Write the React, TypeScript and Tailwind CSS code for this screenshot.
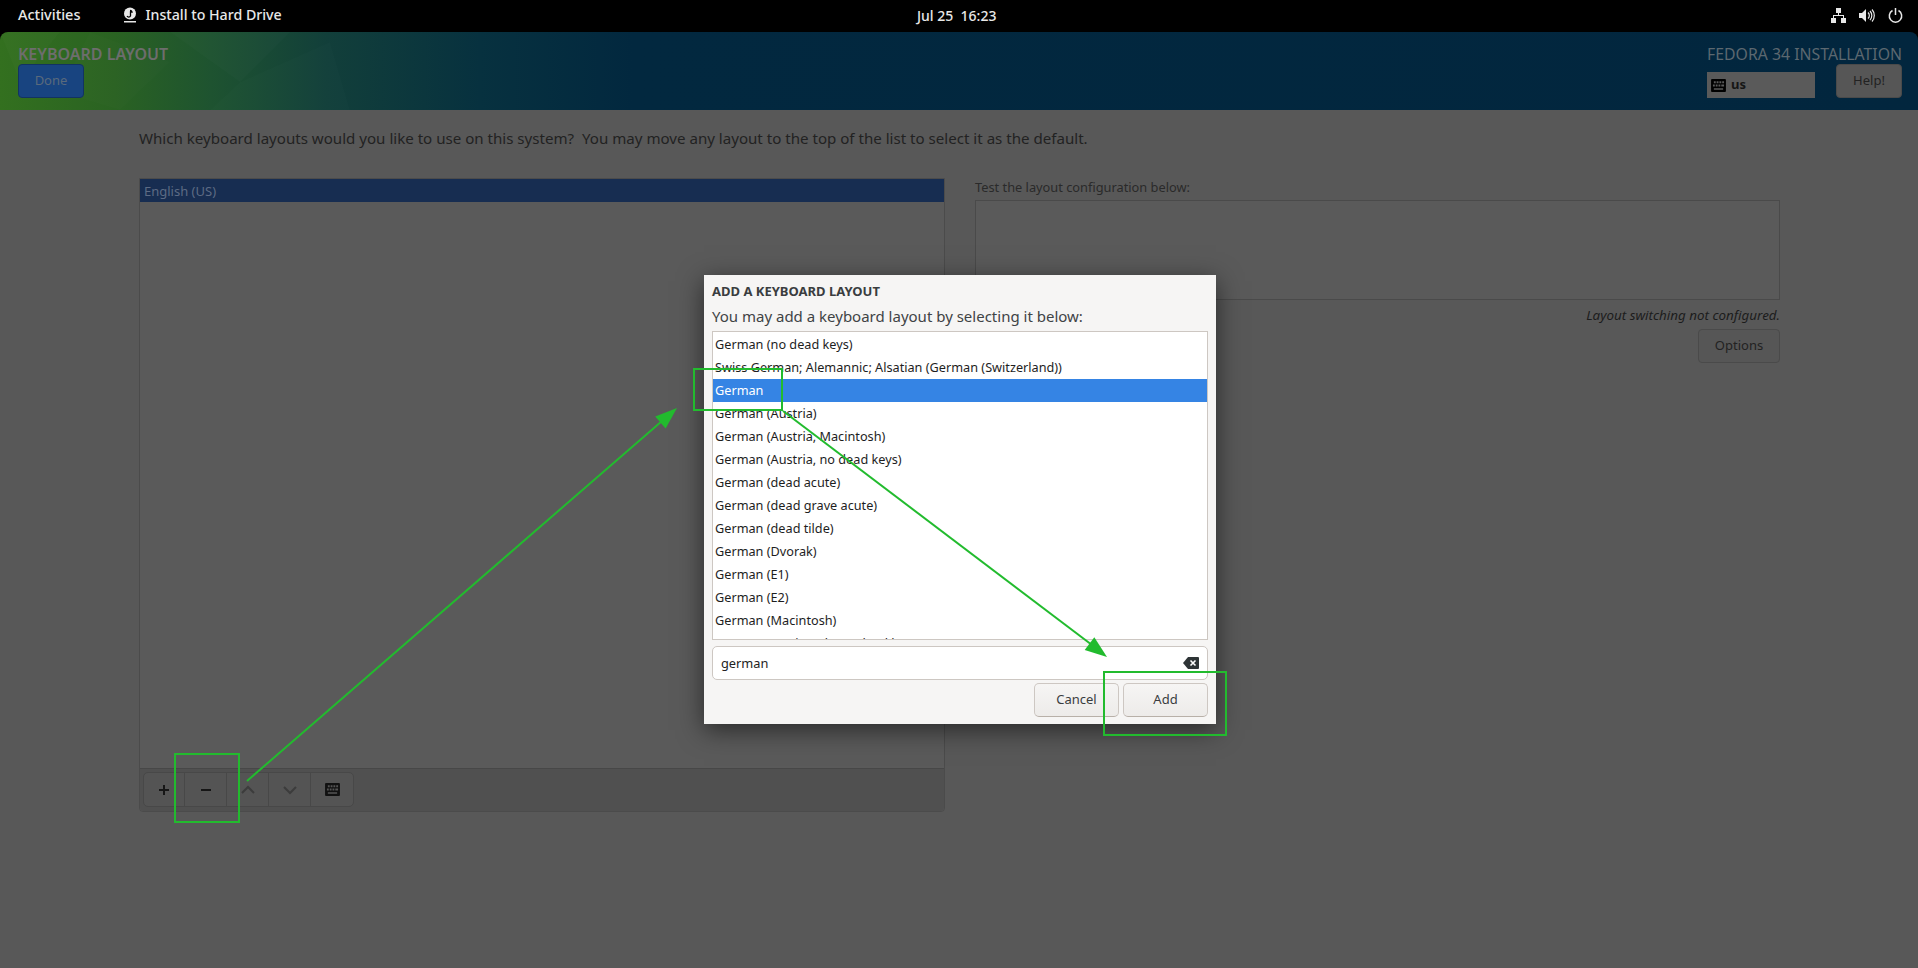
import React from 'react';

const rows = [
  'German (no dead keys)',
  'Swiss German; Alemannic; Alsatian (German (Switzerland))',
  'German',
  'German (Austria)',
  'German (Austria, Macintosh)',
  'German (Austria, no dead keys)',
  'German (dead acute)',
  'German (dead grave acute)',
  'German (dead tilde)',
  'German (Dvorak)',
  'German (E1)',
  'German (E2)',
  'German (Macintosh)',
  'German (Macintosh, no dead keys)',
];

function KeyboardIcon({ className }: { className?: string }) {
  return (
    <svg className={className} viewBox="0 0 16 14" fill="currentColor">
      <path fillRule="evenodd" d="M1 0h14a1 1 0 0 1 1 1v12a1 1 0 0 1-1 1H1a1 1 0 0 1-1-1V1a1 1 0 0 1 1-1Zm2 2.5v2h2v-2H3Zm3 0v2h2v-2H6Zm3 0v2h2v-2H9Zm3 0v2h2v-2h-2ZM2 6v2h2V6H2Zm3 0v2h2V6H5Zm3 0v2h2V6H8Zm3 0v2h3V6h-3ZM3 10v1.5h10V10H3Z" />
    </svg>
  );
}

function TopBar() {
  return (
    <div className="h-8 bg-black text-[#e8e8e8] flex items-center justify-between relative text-[14px] font-medium pb-[2px]">
      <div className="flex items-center">
        <span className="ml-[18px] text-[14.5px]">Activities</span>
        <svg className="ml-[43px] w-[14px] h-[16px]" viewBox="0 0 14 16">
          <circle cx="7" cy="6.5" r="6" fill="#e8e8e8" />
          <path d="M7 3.5a2 2 0 0 1 2 1.5H7.5v4a2 2 0 0 1-3.5 0" fill="none" stroke="#000" strokeWidth="1.3" />
          <rect x="1" y="14" width="12" height="1.5" fill="#e8e8e8" />
        </svg>
        <span className="ml-[8px] text-[14.2px]">Install to Hard Drive</span>
      </div>
      <span className="absolute left-[917px] whitespace-pre">Jul 25  16:23</span>
      <div className="flex items-center gap-[13px] pr-[15px]">
        <svg className="w-[15px] h-[15px]" viewBox="0 0 15 15" fill="#e8e8e8">
          <rect x="5" y="0" width="5" height="5" />
          <rect x="0" y="10" width="5" height="5" />
          <rect x="10" y="10" width="5" height="5" />
          <path d="M7 5h1v2h5v3h-1V8H3v2H2V7h5V5Z" />
        </svg>
        <svg className="w-[16px] h-[15px]" viewBox="0 0 16 15" fill="#e8e8e8">
          <path d="M0 5h3l4-4v13l-4-4H0V5Z" />
          <path d="M9 4.5a4 4 0 0 1 0 6M11 3a6.5 6.5 0 0 1 0 9M13 1.5a9 9 0 0 1 0 12" fill="none" stroke="#e8e8e8" strokeWidth="1.2" />
        </svg>
        <svg className="w-[15px] h-[15px]" viewBox="0 0 15 15" fill="none" stroke="#e8e8e8" strokeWidth="1.5">
          <path d="M4.5 2.5a6.2 6.2 0 1 0 6 0" />
          <path d="M7.5 0v7" />
        </svg>
      </div>
    </div>
  );
}

function Header() {
  return (
    <div className="h-[78px] bg-black">
      <div className="relative h-full overflow-hidden rounded-t-[8px] bg-[linear-gradient(90deg,#33701f_0%,#2a6222_6%,#1e5330_11%,#123f3a_17%,#07313f_25%,#02283f_33%,#02263e_100%)] flex justify-between pl-[18px] pr-[16px] pt-[10px]">
        <svg className="absolute left-0 top-0" width="420" height="78" fill="#fff">
          <polygon points="0,0 60,0 20,50" opacity="0.015" />
          <polygon points="90,0 170,30 120,78 60,60" opacity="0.012" />
          <polygon points="170,0 290,0 240,50" opacity="0.015" />
          <polygon points="240,50 330,10 350,78 210,78" opacity="0.01" />
        </svg>
        <div className="relative">
          <div className="text-[16px] leading-[24px] font-semibold text-[#6d6d6d]">KEYBOARD LAYOUT</div>
          <button className="mt-[-2px] block w-[66px] h-[34px] rounded-[4px] bg-[#184480] border border-[#123362] text-[13px] text-[#5a6a7c]">Done</button>
        </div>
        <div className="relative w-[195px]">
          <div className="text-[15.8px] leading-[24px] text-[#5c6870] whitespace-nowrap text-right">FEDORA 34 INSTALLATION</div>
          <div className="flex justify-between items-start">
            <div className="mt-[6px] w-[108px] h-[26px] bg-[#5a5a5a] flex items-center pl-[4px] text-[13px] font-bold text-[#161616]">
              <KeyboardIcon className="w-[15px] h-[13px] text-black" />
              <span className="ml-[5px]">us</span>
            </div>
            <button className="mt-[-2px] w-[66px] h-[34px] rounded-[4px] bg-[#565656] border border-[#4a4a4a] text-[13px] text-[#222]">Help!</button>
          </div>
        </div>
      </div>
    </div>
  );
}

function LayoutsPanel() {
  return (
    <div className="w-[806px] shrink-0 h-[634px] border border-[#4b4b4b] rounded-b-[4px] flex flex-col bg-[#5a5a5a]">
      <div className="h-[23px] bg-[#172d51] px-[4px] text-[13px] leading-[24px] text-[#5d6b84]">English (US)</div>
      <div className="flex-1" />
      <div className="h-[43px] bg-[#505050] border-t border-[#474747] rounded-b-[4px] pl-[3px] pt-[3px]">
        <div className="w-[211px] h-[35px] flex rounded-[5px] border border-[#484848] bg-[#545454]">
          <div className="w-[41px] flex items-center justify-center border-r border-[#484848]">
            <svg className="w-[12px] h-[12px]" viewBox="0 0 12 12" fill="#161616"><path d="M5 1h2v4h4v2H7v4H5V7H1V5h4V1Z" /></svg>
          </div>
          <div className="w-[42px] flex items-center justify-center border-r border-[#484848]">
            <svg className="w-[12px] h-[12px]" viewBox="0 0 12 12" fill="#161616"><path d="M1 5h10v2H1z" /></svg>
          </div>
          <div className="w-[42px] flex items-center justify-center border-r border-[#484848]">
            <svg className="w-[14px] h-[10px]" viewBox="0 0 14 10" fill="none" stroke="#3c3c3c" strokeWidth="2"><path d="M1 8l6-6 6 6" /></svg>
          </div>
          <div className="w-[42px] flex items-center justify-center border-r border-[#484848]">
            <svg className="w-[14px] h-[10px]" viewBox="0 0 14 10" fill="none" stroke="#3c3c3c" strokeWidth="2"><path d="M1 2l6 6 6-6" /></svg>
          </div>
          <div className="flex-1 flex items-center justify-center">
            <KeyboardIcon className="w-[15px] h-[13px] text-[#111]" />
          </div>
        </div>
      </div>
    </div>
  );
}

function TestPanel() {
  return (
    <div className="w-[805px] shrink-0 ml-[30px] flex flex-col">
      <div className="text-[12.8px] leading-[20px] text-[#2a2a2a] h-[23px] -mt-[1px]">Test the layout configuration below:</div>
      <div className="h-[100px] border border-[#4a4a4a] bg-[#5a5a5a]" />
      <div className="text-[13.4px] italic leading-[20px] text-[#1c1c1c] text-right mt-[5px]">Layout switching not configured.</div>
      <div className="flex justify-end mt-[4px]">
        <button className="w-[82px] h-[34px] rounded-[4px] bg-[#565656] border border-[#4a4a4a] text-[13px] text-[#222]">Options</button>
      </div>
    </div>
  );
}

function AddDialog() {
  return (
    <div className="absolute left-[704px] top-[275px] w-[512px] h-[449px] bg-[#f6f5f4] shadow-[0_6px_24px_rgba(0,0,0,0.55)] px-[8px] text-[#2e3436]">
      <div className="text-[13px] font-bold leading-[18px] mt-[7px] text-[#3a3d3f]">ADD A KEYBOARD LAYOUT</div>
      <div className="text-[15px] leading-[22px] mt-[5px] text-[#3f4345]">You may add a keyboard layout by selecting it below:</div>
      <div className="h-[309px] mt-[4px] border border-[#cdc7c2] bg-white overflow-hidden pt-[1px]">
        {rows.map((r, i) => (
          <div
            key={r}
            className={i === 2 ? 'h-[23px] leading-[23px] px-[2px] text-[12.7px] whitespace-nowrap bg-[#3584e4] text-white' : 'h-[23px] leading-[23px] px-[2px] text-[12.7px] whitespace-nowrap text-[#1e1e1e]'}
          >
            {r}
          </div>
        ))}
      </div>
      <div className="h-[34px] mt-[6px] border border-[#cdc7c2] rounded-[5px] bg-white flex items-center justify-between pl-[8px] pr-[8px] text-[12.8px] text-[#222]">
        <span className="pt-[1px]">german</span>
        <svg className="w-[16px] h-[12px]" viewBox="0 0 16 12">
          <path d="M5 0h10a1 1 0 0 1 1 1v10a1 1 0 0 1-1 1H5L0 6l5-6Z" fill="#2e3436" />
          <path d="M7.5 3.5l5 5m0-5l-5 5" stroke="#fff" strokeWidth="1.6" />
        </svg>
      </div>
      <div className="flex justify-end gap-[4px] mt-[3px]">
        <button className="w-[85px] h-[34px] rounded-[5px] border border-[#cdc7c2] border-b-[#b8b0a8] bg-[linear-gradient(#f6f5f4,#edebe9)] text-[13px] text-[#3a3d3f]">Cancel</button>
        <button className="w-[85px] h-[34px] rounded-[5px] border border-[#cdc7c2] border-b-[#b8b0a8] bg-[linear-gradient(#f6f5f4,#edebe9)] text-[13px] text-[#3a3d3f]">Add</button>
      </div>
    </div>
  );
}

function Annotations() {
  const green = '#22bb2e';
  return (
    <svg className="absolute inset-0 pointer-events-none" width="1918" height="968" fill="none">
      <rect x="175" y="754" width="64" height="68" stroke={green} strokeWidth="2" />
      <rect x="694" y="369" width="88" height="41" stroke={green} strokeWidth="2" />
      <rect x="1104" y="672" width="122" height="63" stroke={green} strokeWidth="2" />
      <path d="M247 781L662 421" stroke={green} strokeWidth="2" />
      <path d="M783 411L1092 645" stroke={green} strokeWidth="2" />
      <polygon points="677,408 665.6,428.4 655.2,416.4" fill={green} />
      <polygon points="1107,657 1084.7,650.1 1094.3,637.3" fill={green} />
    </svg>
  );
}

export default function App() {
  return (
    <div className="relative w-[1918px] h-[968px] overflow-hidden bg-[#585858] font-['Noto_Sans',sans-serif]">
      <TopBar />
      <Header />
      <div className="px-[139px]">
        <p className="mt-[17px] text-[15.1px] leading-[22px] text-[#222] whitespace-pre">Which keyboard layouts would you like to use on this system?  You may move any layout to the top of the list to select it as the default.</p>
        <div className="flex mt-[29px]">
          <LayoutsPanel />
          <TestPanel />
        </div>
      </div>
      <AddDialog />
      <Annotations />
    </div>
  );
}
